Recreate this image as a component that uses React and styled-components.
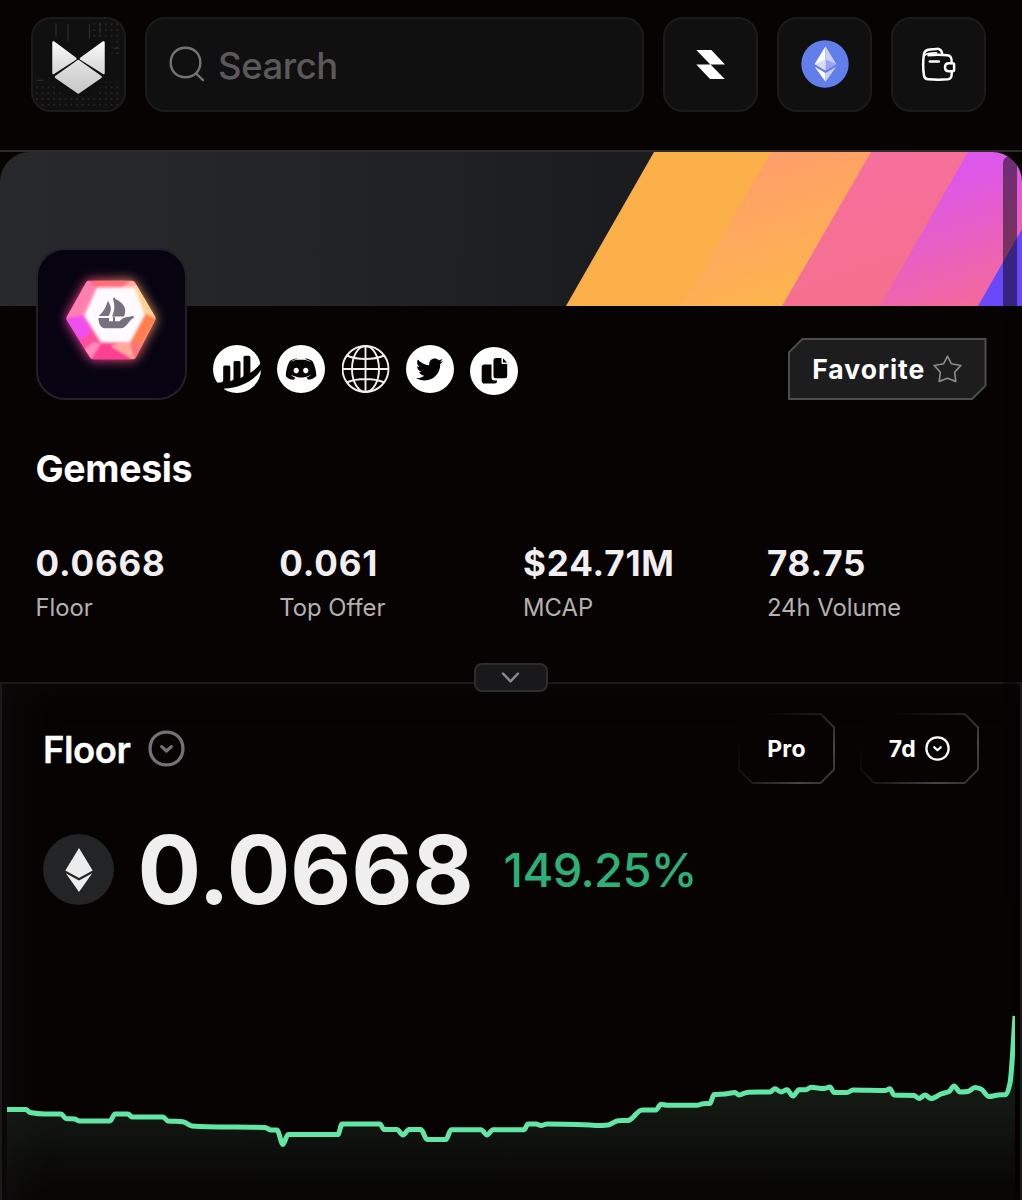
import React from "react";
import styled, { createGlobalStyle, css } from "styled-components";
import { FaTwitter } from "react-icons/fa";

const GlobalStyle = createGlobalStyle`
  *, *::before, *::after { box-sizing: border-box; }
  body { margin: 0; background: #070303; }
`;

const Page = styled.div`
  display: flex;
  flex-direction: column;
  position: relative;
  height: 1200px;
  overflow: hidden;
  background: #070303;
  color: #fff;
  font-family: Inter, "Liberation Sans", sans-serif;
`;

const TopBar = styled.header`
  display: flex;
  align-items: flex-start;
  gap: 19px;
  height: 152px;
  flex: none;
  padding: 16.5px 36px 0 31px;
  border-bottom: 2px solid #2f2b2d;
`;

const tileSurface = css`
  height: 95px;
  background: #101010;
  border: 2px solid #1c1b1c;
  border-radius: 20px;
`;

const Tile = styled.button`
  ${tileSurface}
  display: flex;
  align-items: center;
  justify-content: center;
  flex: none;
  width: 95px;
  padding: 0;
  overflow: hidden;
`;

const SearchBox = styled.div`
  ${tileSurface}
  display: flex;
  align-items: center;
  flex: 1;
  gap: 13px;
  padding: 0 22px;
  color: #5a5a5b;
  font-size: 36.5px;
  font-weight: 500;
  letter-spacing: -0.45px;
  > span { padding-top: 3px; }
`;

const Hero = styled.section`
  height: 530px;
  flex: none;
`;

const Banner = styled.div`
  height: 154px;
  border-radius: 30px 30px 0 0;
  overflow: hidden;
  svg { display: block; }
`;

const Profile = styled.div`
  display: flex;
  align-items: flex-end;
  position: relative;
  margin-top: -58px;
  padding: 0 35.5px 0 36px;
`;

const Avatar = styled.div`
  width: 151px;
  height: 152px;
  border: 2px solid #222126;
  border-radius: 29px;
  background: #070311;
  overflow: hidden;
  svg { display: block; }
`;

const Links = styled.div`
  display: flex;
  gap: 16.3px;
  margin: 0 auto 7px 26px;
`;

const RoundLink = styled.a`
  display: flex;
  align-items: center;
  justify-content: center;
  width: 48px;
  height: 48px;
  margin-bottom: ${(p) => (p.$drop ? -p.$drop : 0)}px;
  margin-top: ${(p) => p.$drop || 0}px;
  border-radius: 50%;
  color: #060303;
  background: ${(p) => (p.$bare ? "transparent" : "#fff")};
`;

const FavoriteButton = styled.button`
  display: flex;
  align-items: center;
  justify-content: center;
  gap: 8px;
  position: relative;
  width: 198.5px;
  height: 62px;
  padding: 0;
  border: 0;
  background: #4d4d4e;
  clip-path: polygon(14px 0, 100% 0, 100% calc(100% - 14px), calc(100% - 14px) 100%, 0 100%, 0 14px);
  color: #fff;
  font: 700 26.5px Inter, sans-serif;
  letter-spacing: 1px;
  &::before {
    content: "";
    position: absolute;
    inset: 2px;
    background: #1d1d1e;
    clip-path: polygon(12.8px 0, 100% 0, 100% calc(100% - 12.8px), calc(100% - 12.8px) 100%, 0 100%, 0 12.8px);
  }
  > * { position: relative; }
`;

const Title = styled.h1`
  margin: 45px 36px 0 35.5px;
  font-size: 37.5px;
  font-weight: 700;
  line-height: 47px;
  letter-spacing: -0.35px;
`;

const Stats = styled.div`
  display: grid;
  grid-template-columns: repeat(4, 243.8px);
  margin: 48px 0 0 35.5px;
`;

const StatValue = styled.div`
  color: #f1efef;
  font-size: 35px;
  font-weight: 700;
  line-height: 46px;
  letter-spacing: 0.85px;
`;

const StatLabel = styled.div`
  margin-top: 6px;
  color: #b5b1b1;
  font-size: 23.8px;
  line-height: 31px;
  letter-spacing: 0;
`;

const Panel = styled.main`
  display: flex;
  flex-direction: column;
  flex: 1;
  position: relative;
  padding-top: 29px;
  border: 2px solid #1b1a1b;
  border-bottom: 0;
  box-shadow: inset 26px 6px 40px -14px #0e0b0c;
`;

const Collapse = styled.button`
  display: flex;
  align-items: center;
  justify-content: center;
  position: absolute;
  top: -21px;
  left: 472px;
  width: 74px;
  height: 29px;
  padding: 0;
  border: 2px solid #2d2d2f;
  border-radius: 8px;
  background: #19191b;
`;

const PanelHeader = styled.div`
  display: flex;
  align-items: center;
  height: 71px;
  padding: 0 41px;
`;

const Metric = styled.div`
  display: flex;
  align-items: center;
  gap: 18px;
  margin-right: auto;
  font-size: 36.5px;
  font-weight: 600;
  letter-spacing: -0.5px;
  -webkit-text-stroke: 0.3px #fff;
  > span { padding-top: 2px; }
`;

const Chip = styled.button`
  display: flex;
  align-items: center;
  justify-content: center;
  gap: 9px;
  position: relative;
  width: ${(p) => p.$width}px;
  height: 71px;
  margin-left: ${(p) => p.$gap || 0}px;
  padding: 0;
  border: 0;
  background: linear-gradient(135deg, #070303 18%, #1c1b1c 48%, #454446 78%, #2c2b2d 100%);
  clip-path: polygon(14px 0, calc(100% - 14px) 0, 100% 14px, 100% calc(100% - 14px), calc(100% - 14px) 100%, 14px 100%, 0 calc(100% - 14px), 0 14px);
  color: #fff;
  font: 700 23px Inter, sans-serif;
  letter-spacing: 0.3px;
  &::before {
    content: "";
    position: absolute;
    inset: 2px;
    background: #070303;
    clip-path: polygon(12.8px 0, calc(100% - 12.8px) 0, 100% 12.8px, 100% calc(100% - 12.8px), calc(100% - 12.8px) 100%, 12.8px 100%, 0 calc(100% - 12.8px), 0 12.8px);
  }
  > * { position: relative; }
`;

const PriceRow = styled.div`
  display: flex;
  align-items: center;
  height: 71px;
  margin-top: 50px;
  padding: 0 41px;
`;

const Coin = styled.div`
  display: flex;
  align-items: center;
  justify-content: center;
  flex: none;
  width: 71px;
  height: 71px;
  border-radius: 50%;
  background: #222425;
`;

const Price = styled.div`
  flex: none;
  width: 334px;
  margin-left: 23.5px;
  color: #f0eff0;
  font-size: 94.5px;
  font-weight: 700;
  line-height: 71px;
  letter-spacing: -0.3px;
  white-space: nowrap;
`;

const Change = styled.div`
  margin-left: 32px;
  color: #2cb078;
  font-size: 47px;
  font-weight: 500;
  line-height: 71px;
  letter-spacing: -0.6px;
`;

const ChartArea = styled.div`
  flex: 1;
  padding: 0 5px;
  svg { display: block; }
`;

const ScrollThumb = styled.div`
  position: absolute;
  top: 156px;
  left: 1003px;
  width: 14px;
  height: 746px;
  border-radius: 7px;
  background: rgba(4, 1, 6, 0.5);
`;

const FoxLogo = () => (
  <svg width="95" height="95" viewBox="31 16.5 95 95">
    <defs>
      <linearGradient id="fox" x1="0" y1="40" x2="0" y2="95" gradientUnits="userSpaceOnUse">
        <stop offset="0" stopColor="#fafafa" />
        <stop offset=".5" stopColor="#dcdcdc" />
        <stop offset="1" stopColor="#c6c6c6" />
      </linearGradient>
      <pattern id="dots" width="6" height="6" patternUnits="userSpaceOnUse">
        <circle cx="5" cy="4" r=".65" fill="#4a4a4a" />
      </pattern>
    </defs>
    <path d="M34 84h18l10 12h32l12-14h16v26H34zM92 20h30v35h-9V36H92z" fill="url(#dots)" />
    <path d="M55 21v14M67.500 22v17M90 22v15M101 20v12M35 80.500h7M115 47h6" stroke="#343434" fill="none" />
    <g fill="url(#fox)" stroke="url(#fox)" strokeWidth="2.400" strokeLinejoin="round">
      <path d="M52.300 40.800L75.300 58 52.300 73z" />
      <path d="M104.700 40.800L81 58l23.700 15z" />
      <path d="M78.300 60.300L101.700 77 78.300 93.400 54.900 77z" />
    </g>
  </svg>
);

const EthMark = () => (
  <svg width="48" height="48" viewBox="0 0 48 48">
    <circle cx="24" cy="24" r="23.700" fill="#627eea" />
    <path d="M24.500 6.300v24.200L13.700 24z" fill="#fff" />
    <path d="M24.500 6.300L35.200 24l-10.700 6.500z" fill="#c8d0f8" />
    <path d="M24.500 19.200L35.200 24l-10.700 6.500z" fill="#96a6f1" />
    <path d="M24.500 19.200v11.300L13.700 24z" fill="#d6dcfa" />
    <path d="M13.700 26.800l10.800 6.200v8.700z" fill="#fff" />
    <path d="M35.200 26.800L24.500 33v8.700z" fill="#c8d0f8" />
  </svg>
);

const WalletIcon = () => (
  <svg width="37" height="37" viewBox="-2 -2 37 37" fill="none" stroke="#fff" strokeWidth="2.500" strokeLinecap="round" strokeLinejoin="round">
    <path d="M29.700 15C29.900 9.800 29 7.700 25.500 7.300 19 6.700 13 6.700 6.500 7.300" />
    <path d="M20.400 6.600C19.900 2.900 17.900.6 14.500.9L7.800 1.600C4 2 2.300 3.400 1.900 6.400 1 13 .9 21 2 27.500c.4 2.700 1.500 3.600 4.300 3.800 7 .5 13.500.5 19.500 0 2.800-.3 3.700-1.600 3.800-4.300l.2-3.700" />
    <path d="M2.500 7.600C4 5.400 8 4.800 14.500 4.800" strokeWidth="1.800" />
    <path d="M7.800 13.400h9" />
    <path d="M27 15.200h3.600c1 0 1.500.5 1.500 1.500v5c0 1-.5 1.500-1.500 1.500H27c-2.500 0-4-1.600-4-4s1.500-4 4-4z" />
  </svg>
);

const BannerArt = () => (
  <svg width="1022" height="154" viewBox="0 0 1022 154">
    <defs>
      <linearGradient id="slate"><stop stopColor="#27292c" /><stop offset=".35" stopColor="#212326" /><stop offset=".6" stopColor="#1b1c20" /></linearGradient>
      <linearGradient id="peach" x1=".3" y1="0" x2=".7" y2="1"><stop offset=".1" stopColor="#ff9f69" /><stop offset=".9" stopColor="#fdb44e" /></linearGradient>
      <linearGradient id="rose" x2=".4" y2="1"><stop stopColor="#f86fa2" /><stop offset="1" stopColor="#f4708c" /></linearGradient>
      <linearGradient id="orchid" x1=".3" y1="0" x2=".7" y2="1"><stop offset=".15" stopColor="#dc57ea" /><stop offset="1" stopColor="#f66a94" /></linearGradient>
    </defs>
    <path fill="url(#slate)" d="M0 0h1022v154H0z" />
    <path fill="#fbaf49" d="M654 0h130l-88 154H566z" />
    <path fill="url(#peach)" d="M771 0h102l-88 154H682z" />
    <path fill="url(#rose)" d="M871 0h99l-88 154H782z" />
    <path fill="url(#orchid)" d="M968 0h100l-88 154H880z" />
    <path fill="#6748fb" d="M1066 0v154h-88z" />
  </svg>
);

const GemArt = () => (
  <svg width="147" height="148" viewBox="2 1.500 147 148">
    <defs>
      <linearGradient id="gemEdge" x1="0" y1=".7" x2="1" y2=".3">
        <stop stopColor="#ff3fc4" /><stop offset=".5" stopColor="#ff5d7a" /><stop offset="1" stopColor="#ffc37a" />
      </linearGradient>
      <filter id="glow" x="-40%" y="-40%" width="180%" height="180%"><feGaussianBlur stdDeviation="6" /></filter>
      <filter id="soft" x="-20%" y="-20%" width="140%" height="140%"><feGaussianBlur stdDeviation="1.500" /></filter>
      <filter id="facet" x="-20%" y="-20%" width="140%" height="140%"><feGaussianBlur stdDeviation="1" /></filter>
      <clipPath id="gem"><path d="M53 32h43q2 0 3 2l20 34q1 2 0 4L100 109q-1 2-3 2H57q-2 0-3-2L31 72q-1-2 0-4L50 34q1-2 3-2z" /></clipPath>
    </defs>
    <path filter="url(#glow)" fill="url(#gemEdge)" d="M52 32h45l23 38-21 41H55L30 70z" />
    <g clipPath="url(#gem)">
      <path fill="url(#gemEdge)" d="M25 25h100v95H25z" />
      <g filter="url(#facet)">
        <path fill="#ff7fb0" d="M52 30l9 10-13 27-20 3z" />
        <path fill="#f04ff0" d="M28 70l20-3 9 20-13 8z" />
        <path fill="#ff4f9e" d="M42 92l15-9 8 13-9 17z" />
        <path fill="#ff3f92" d="M56 113l9-19 16 1 15 18z" />
        <path fill="#ffa99b" d="M81 95l13-1 5 18-24-14z" />
        <path fill="#ff7d4f" d="M94 94l15-29 11 6-16 25z" />
        <path fill="#ffd08e" d="M109 65L98 40l3-7 21 37z" />
        <path fill="#ff6d7b" d="M56 30h39l-10 10H61z" />
        <path fill="#ffb5c8" d="M85 40l12-8 3 8zM46 103l11-9 8 1-10 15z" opacity=".6" />
      </g>
      <path filter="url(#soft)" fill="#fff" d="M61 39h38l10 27-15 28H65L48 67z" />
    </g>
    <path fill="#fffafd" d="M62 41h35l10 25-14 26H66L50 67z" />
    <g fill="#77717f">
      <path d="M62.400 69.500h10.600v3.200h4v-4.200h2v4.200h4.500c2-2 3.800-3.700 8.500-4.200l6-1.200-.5 2.200c-5 2.200-6.300 9.500-12 10.200H69c-4 0-6.600-4.600-6.600-10.200z" />
      <path d="M77 50.500l1.200-2 1.200 2c7.200 3.200 12.600 9.500 8.500 17.500H76c2.600-5.600 3.200-10.600 1-17.500z" />
      <path d="M71.800 52.500c4.200 5.600 3.700 10 .8 15h-9.800c4-3.600 7.500-8.600 9-15z" />
    </g>
  </svg>
);

const BarsIcon = () => (
  <svg width="48" height="48" viewBox="0 0 48 48" fill="#060303">
    <path d="M0 38.500L6 37.500c3.500.3 4.200-.8 4.200-3V22q0-1.500 1.500-1.500h4q1.600 0 1.600 1.500v14c1.600-.3 3.200-.7 3.200-2V17.500q0-1.500 1.500-1.500h4q1.500 0 1.500 1.500v15.600c1.500-.6 3-1.300 3-3V12.300q0-1.500 1.500-1.500h3.800q1.600 0 1.600 1.500v15.500C41.500 25 45 22 48 17.500V25C41 36 26 43.500 11.500 43.500L6 48H0z" />
  </svg>
);

const DiscordIcon = () => (
  <svg width="48" height="48" viewBox="0 0 48 48">
    <path transform="translate(-1.200 1.600) scale(2.100)" fillRule="evenodd" fill="#060303" d="M14.104 5.683h-.03l-.202.2c2.073.6 3.076 1.537 3.076 1.537-1.336-.668-2.540-1.002-3.744-1.137-.87-.135-1.740-.064-2.475 0h-.2c-.47 0-1.470.2-2.810.735-.467.203-.735.336-.735.336s1.002-1.002 3.210-1.537l-.135-.135s-1.672-.064-3.477 1.270c0 0-1.805 3.144-1.805 7.020 0 0 1 1.740 3.743 1.806 0 0 .4-.533.805-1.002-1.540-.468-2.140-1.404-2.140-1.404s.134.066.335.2h.06c.03 0 .044.015.06.03v.006c.016.016.03.03.06.03.33.136.66.27.93.4.466.202 1.065.403 1.800.536.93.135 1.996.2 3.210 0 .6-.135 1.200-.267 1.800-.535.39-.2.87-.4 1.397-.737 0 0-.6.936-2.205 1.404.33.466.795 1 .795 1 2.744-.06 3.810-1.800 3.870-1.726 0-3.870-1.815-7.020-1.815-7.020-1.635-1.214-3.165-1.260-3.435-1.260zm.168 4.413c.703 0 1.270.6 1.270 1.335 0 .74-.57 1.340-1.270 1.340-.7 0-1.270-.6-1.270-1.334.002-.74.573-1.338 1.270-1.338zm-4.543 0c.7 0 1.266.6 1.266 1.335 0 .74-.57 1.340-1.270 1.340-.7 0-1.270-.6-1.270-1.334 0-.74.57-1.338 1.270-1.338z" />
  </svg>
);

const GlobeIcon = () => (
  <svg width="48" height="48" viewBox="0 0 48 48" fill="none" stroke="#f4efea" strokeWidth="1.900">
    <circle cx="23.500" cy="24" r="23" />
    <ellipse cx="23.500" cy="24" rx="13.500" ry="23" />
    <path d="M23.500 1v46M.5 24h46M4.500 10.500c11 4.600 27 4.600 38 0M4.500 37.500c11-4.600 27-4.600 38 0" />
  </svg>
);

const CopyIcon = () => (
  <svg width="48" height="48" viewBox="0 0 48 48" fill="#060303">
    <path d="M14.500 17.500h7v13q0 3 3 3h2.500v.5q0 2.500-2.500 2.500h-10q-2.800 0-2.800-2.800V20.200q0-2.700 2.800-2.700z" />
    <path d="M26 11h5.500v5q0 1 1 1h4.700v11.700q0 2.500-2.500 2.500H26q-2.500 0-2.500-2.500V13.500Q23.500 11 26 11z" />
    <path d="M33 11.200l4 4.200h-4z" />
  </svg>
);

const CircleChevron = ({ size, color, weight }) => (
  <svg width={size} height={size} viewBox="0 0 36 36" fill="none" stroke={color} strokeWidth={weight} strokeLinecap="round" strokeLinejoin="round">
    <path d="M18 2C27.300 2 34 8.700 34 18s-6.700 16-16 16S2 27.300 2 18 8.700 2 18 2z" />
    <path d="M13.300 16.200l4.700 4.300 4.700-4.300" />
  </svg>
);

const series = [
  [0, 1109.5], [26, 1109.5], [30, 1112.5], [45, 1114], [61, 1114], [66, 1118.5], [75, 1119], [79, 1121],
  [110, 1121], [115, 1114], [128, 1114], [132, 1117], [163, 1117], [168, 1121], [183, 1121.7], [192, 1126],
  [208, 1126.8], [265, 1127.5], [271, 1130], [277, 1130], [283, 1144.5], [288, 1134.5], [338, 1134.5],
  [342, 1124], [380, 1124], [384, 1129.6], [397, 1129.6], [403, 1135], [409, 1129.6], [421, 1129.6],
  [427, 1139.5], [446, 1139.5], [451, 1129.7], [481, 1129.7], [487, 1135], [493, 1129.7], [524, 1129.7],
  [528, 1124], [536, 1124], [541, 1125.5], [547, 1124], [590, 1125], [597, 1125.6], [608, 1125],
  [618, 1120.7], [628, 1120.5], [642, 1110], [656, 1110], [661, 1104.2], [667, 1105.3], [697, 1105.3],
  [703, 1103.7], [710, 1103.5], [714, 1094.5], [725, 1094], [735, 1092.5], [739, 1095], [748, 1092.2],
  [770, 1092], [775, 1088.8], [781, 1092], [787, 1089.7], [793, 1096], [799, 1089.8], [806, 1089.7],
  [811, 1087.3], [824, 1088.5], [830, 1087], [834, 1092.5], [847, 1092.5], [853, 1090], [885, 1090.5],
  [890, 1088.7], [894, 1095], [914, 1095.5], [919, 1098.5], [925, 1095], [931, 1098.5], [941, 1094],
  [949, 1091.5], [954, 1086], [960, 1092], [968, 1091.5], [975, 1087.5], [981, 1089], [989, 1096.5],
  [998, 1095], [1006, 1094.5], [1010, 1083], [1015, 1016],
];

// Cubic segments whose slopes flatten at every local extreme.
const monotonePath = (pts) => {
  const slope = pts.slice(1).map((p, i) => (p[1] - pts[i][1]) / (p[0] - pts[i][0]));
  const tan = pts.map((_, i) => {
    if (i === 0) return slope[0];
    if (i === pts.length - 1) return slope[i - 1];
    const a = slope[i - 1];
    const b = slope[i];
    return a * b <= 0 ? 0 : (2 * a * b) / (a + b);
  });
  return pts.slice(1).reduce((d, [x, y], i) => {
    const [px, py] = pts[i];
    const h = (x - px) / 3;
    return `${d}C${px + h} ${py + tan[i] * h} ${x - h} ${y - tan[i + 1] * h} ${x} ${y}`;
  }, `M${pts[0][0]} ${pts[0][1]}`);
};

const PriceChart = () => {
  const line = monotonePath(series);
  return (
    <svg width="1008" height="295" viewBox="7 905 1008 295">
      <defs>
        <linearGradient id="fill" x1="0" y1="1016" x2="0" y2="1200" gradientUnits="userSpaceOnUse">
          <stop offset="0" stopColor="#72e6a6" stopOpacity=".15" />
          <stop offset=".5" stopColor="#8ae6a6" stopOpacity=".09" />
          <stop offset="1" stopColor="#72e6a6" stopOpacity="0.01" />
        </linearGradient>
      </defs>
      <path d={`${line}V1200H0z`} fill="url(#fill)" />
      <path d={line} fill="none" stroke="#62e6a6" strokeWidth="5" strokeLinejoin="round" />
    </svg>
  );
};

const stats = [
  ["0.0668", "Floor"],
  ["0.061", "Top Offer"],
  ["$24.71M", "MCAP"],
  ["78.75", "24h Volume"],
];

export default function App() {
  return (
    <Page>
      <GlobalStyle />
      <TopBar>
        <Tile><FoxLogo /></Tile>
        <SearchBox>
          <svg width="36" height="36" viewBox="0 0 36 36" fill="none" stroke="#737374" strokeWidth="2.400" strokeLinecap="round">
            <path d="M16.500 1.700C25.200 1.700 31.300 7.800 31.300 16.500S25.200 31.300 16.500 31.300 1.700 25.200 1.700 16.500 7.800 1.700 16.500 1.700zM27.600 28l6.400 6.200" />
          </svg>
          <span>Search</span>
        </SearchBox>
        <Tile>
          <svg width="29" height="29" viewBox="0 0 29 29" fill="#fff">
            <path d="M.3 0h15L29 14.500H14.500L28.800 29H14L.3 14.500h14z" />
          </svg>
        </Tile>
        <Tile><EthMark /></Tile>
        <Tile><WalletIcon /></Tile>
      </TopBar>

      <Hero>
        <Banner><BannerArt /></Banner>
        <Profile>
          <Avatar><GemArt /></Avatar>
          <Links>
            <RoundLink><BarsIcon /></RoundLink>
            <RoundLink><DiscordIcon /></RoundLink>
            <RoundLink $bare><GlobeIcon /></RoundLink>
            <RoundLink><FaTwitter size={27} /></RoundLink>
            <RoundLink $drop={2}><CopyIcon /></RoundLink>
          </Links>
          <FavoriteButton>
            <span>Favorite</span>
            <svg width="29" height="28" viewBox="0 0 29 28" fill="none" stroke="#8b8b8c" strokeWidth="1.600" strokeLinejoin="round">
              <path d="M14.500 1.200c1.300 2.500 2.500 5 4 7.600 3.100.7 6.400 1.100 9.400 1.700-2.200 2.300-4.300 4.300-6.200 6.700.2 3.100.8 6.200 1.100 9.200-3-.9-5.500-2.200-8.300-3.200-2.800 1-5.300 2.300-8.300 3.200.3-3 .9-6.100 1.100-9.200-1.900-2.400-4-4.400-6.200-6.700 3-.6 6.300-1 9.400-1.700 1.500-2.600 2.700-5.100 4-7.600z" />
            </svg>
          </FavoriteButton>
        </Profile>
        <Title>Gemesis</Title>
        <Stats>
          {stats.map(([value, label]) => (
            <div key={label}>
              <StatValue>{value}</StatValue>
              <StatLabel>{label}</StatLabel>
            </div>
          ))}
        </Stats>
      </Hero>

      <Panel>
        <Collapse>
          <svg width="20" height="12" viewBox="0 0 20 12" fill="none" stroke="#8b8b8d" strokeWidth="2.400" strokeLinecap="round" strokeLinejoin="round">
            <path d="M2 1.500l7.500 7.800L17 1.500" />
          </svg>
        </Collapse>
        <PanelHeader>
          <Metric>
            <span>Floor</span>
            <CircleChevron size={37} color="#717178" weight={3.2} />
          </Metric>
          <Chip $width={97}><span>Pro</span></Chip>
          <Chip $width={119} $gap={25}>
            <span>7d</span>
            <CircleChevron size={25} color="#fff" weight={3.3} />
          </Chip>
        </PanelHeader>
        <PriceRow>
          <Coin>
            <svg width="28" height="44" viewBox="0 0 28 44" fill="#ececed">
              <path d="M14 0l13.700 22.500L14 30 .3 22.500z" />
              <path d="M.8 25.300L14 32.400l13.200-7.100L14 44z" />
            </svg>
          </Coin>
          <Price>0.0668</Price>
          <Change>149.25%</Change>
        </PriceRow>
        <ChartArea><PriceChart /></ChartArea>
      </Panel>
      <ScrollThumb />
    </Page>
  );
}
